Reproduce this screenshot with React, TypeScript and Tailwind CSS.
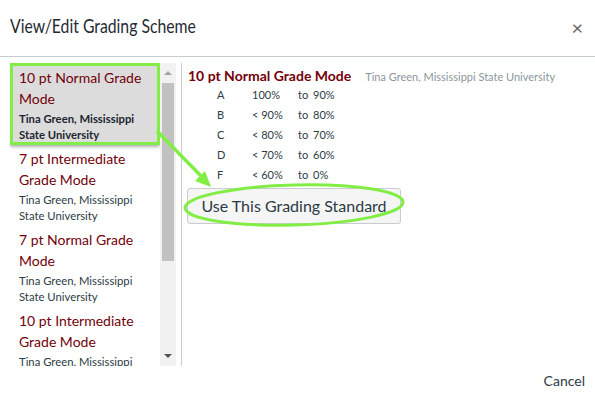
import React from "react";

type Scheme = {
  title: string;
  owner: string;
};

const schemes: Scheme[] = [
  { title: "10 pt Normal Grade Mode", owner: "Tina Green, Mississippi State University" },
  { title: "7 pt Intermediate Grade Mode", owner: "Tina Green, Mississippi State University" },
  { title: "7 pt Normal Grade Mode", owner: "Tina Green, Mississippi State University" },
  { title: "10 pt Intermediate Grade Mode", owner: "Tina Green, Mississippi State University" },
];

const grades = [
  { letter: "A", from: "100%", to: "90%" },
  { letter: "B", from: "< 90%", to: "80%" },
  { letter: "C", from: "< 80%", to: "70%" },
  { letter: "D", from: "< 70%", to: "60%" },
  { letter: "F", from: "< 60%", to: "0%" },
];

export default function App() {
  return (
    <div className="relative w-[595px] h-[397px] bg-white overflow-hidden font-['Lato','Liberation_Sans',sans-serif] text-[#2d3b45]">
      {/* Header */}
      <div className="h-[57px] flex items-center justify-between pl-[10px] pr-[12px] border-b border-[#c7cdd1]">
        <h1 className="text-[19px] leading-none -mt-[5px] origin-left scale-x-[0.83] whitespace-nowrap text-[#1f2a33]">
          View/Edit Grading Scheme
        </h1>
        <span className="text-[20px] leading-none text-[#666] -mt-[2px]">×</span>
      </div>

      {/* Body */}
      <div className="flex h-[309px] pt-[6px]">
        {/* Scheme list + scrollbar */}
        <div className="flex ml-[10px] w-[166px] h-[303px]">
          <div className="w-[150px] overflow-hidden">
            {schemes.map((s, i) => {
              const selected = i === 0;
              return (
                <div
                  key={i}
                  className={
                    selected
                      ? "h-[82px] pl-[6px] pt-[1px] bg-[#dcdcdc] border-[3px] border-[#82ee45] shadow-[0_1px_4px_rgba(0,0,0,0.45)]"
                      : "h-[81px] pl-[9px] pt-[3px]"
                  }
                >
                  <div className="text-[14px] leading-[21px] text-[#73000a]">{s.title}</div>
                  <div className={`text-[11.3px] leading-[16px] mt-[2px] pr-[8px] ${selected ? "font-bold text-[#1c2630]" : "text-[#2d3b45]"}`}>
                    {s.owner}
                  </div>
                </div>
              );
            })}
          </div>
          <div className="w-[16px] bg-[#f1f1f1] flex flex-col items-center">
            <div className="h-[20px] flex items-center justify-center">
              <div className="w-0 h-0 border-l-[4px] border-r-[4px] border-b-[4px] border-l-transparent border-r-transparent border-b-[#a3a3a3]" />
            </div>
            <div className="w-[12px] h-[178px] bg-[#c1c1c1]" />
            <div className="flex-1" />
            <div className="h-[20px] flex items-center justify-center">
              <div className="w-0 h-0 border-l-[4px] border-r-[4px] border-t-[4px] border-l-transparent border-r-transparent border-t-[#505050]" />
            </div>
          </div>
        </div>

        {/* Divider */}
        <div className="ml-[5px] w-px h-[303px] bg-[#c7cdd1]" />

        {/* Detail */}
        <div className="pl-[6px] pt-[2px]">
          <div className="flex items-baseline">
            <span className="text-[14px] font-bold text-[#73000a]">10 pt Normal Grade Mode</span>
            <span className="ml-[14px] text-[11px] text-[#8b969e]">Tina Green, Mississippi State University</span>
          </div>
          <div className="-mt-[1px]">
            {grades.map((g) => (
              <div key={g.letter} className="flex h-[20px] items-center text-[11px]">
                <span className="ml-[29px] w-[35px]">{g.letter}</span>
                <span className="w-[46px]">{g.from}</span>
                <span className="w-[15px]">to</span>
                <span>{g.to}</span>
              </div>
            ))}
          </div>
          <button className="mt-[3px] -ml-[1px] w-[214px] h-[36px] rounded-[3px] border border-[#c7cdd1] bg-[#f5f5f5] text-[16px] text-[#2d3b45]">
            Use This Grading Standard
          </button>
        </div>
      </div>

      {/* Footer */}
      <div className="flex justify-end pr-[10px] pt-[4px]">
        <span className="text-[14px]">Cancel</span>
      </div>

      {/* Annotation overlay */}
      <svg className="absolute left-0 top-0 pointer-events-none" width="595" height="397">
        <ellipse cx="294" cy="205" rx="109" ry="20" fill="none" stroke="#82ee45" strokeWidth="3" transform="rotate(-1.5 294 205)" />
        <line x1="157" y1="131" x2="203" y2="178" stroke="#82ee45" strokeWidth="3.5" />
        <polygon points="211,187 195,181 205,171" fill="#82ee45" />
      </svg>
    </div>
  );
}
